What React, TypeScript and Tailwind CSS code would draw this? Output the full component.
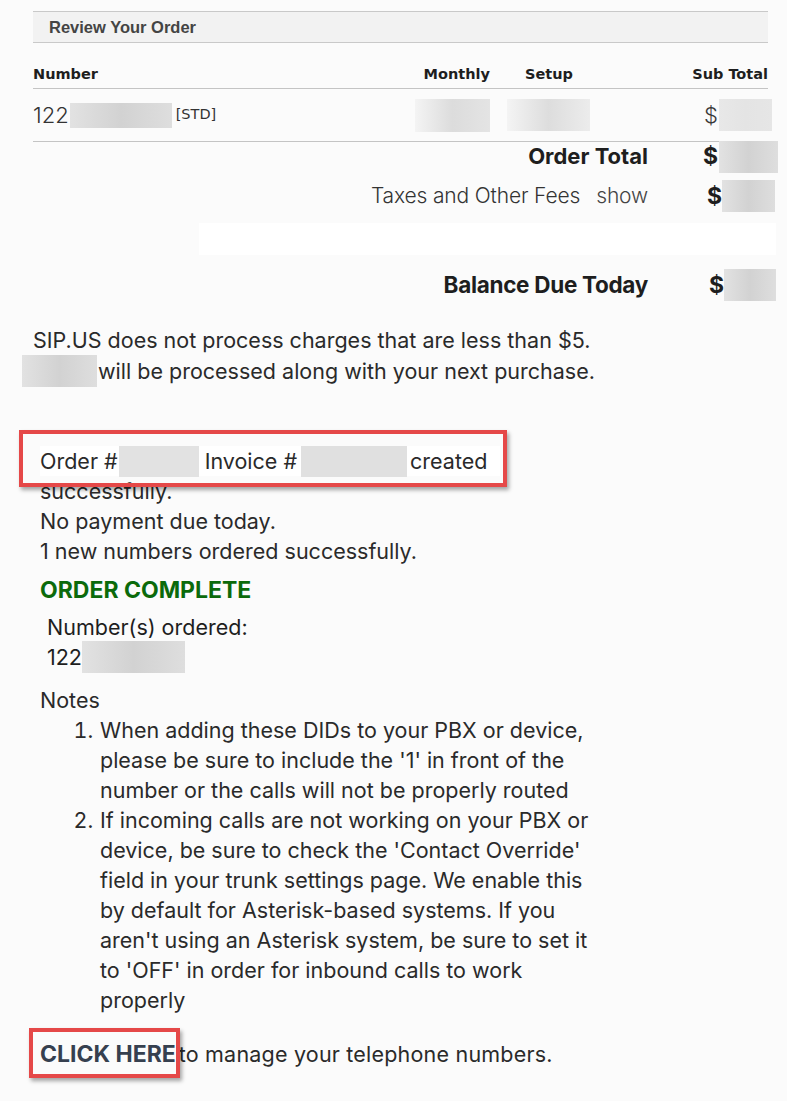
import React from "react";

function Blur({ className = "" }: { className?: string }) {
  return (
    <span
      className={
        "inline-block bg-gradient-to-r from-[#e2e2e2] via-[#d2d2d2] to-[#dedede] align-middle " +
        className
      }
    />
  );
}

export default function App() {
  return (
    <div className="min-h-[1101px] w-[787px] bg-[#fbfbfb] font-['Inter',sans-serif] text-[#262626] relative overflow-hidden">
      <div className="h-[11px]" />
      {/* Header bar */}
      <div className="ml-[33px] w-[735px] h-[32px] border-y border-[#c9c9c9] bg-[#f2f2f2] flex items-center pl-[16px]">
        <span className="font-['Liberation_Sans',sans-serif] font-bold text-[16.5px] text-[#444]">
          Review Your Order
        </span>
      </div>

      {/* Table */}
      <div className="ml-[33px] w-[735px]">
        <div className="grid grid-cols-[357px_100px_178px_100px] h-[46px] border-b border-[#c4c4c4] items-end pb-[5px] font-['DejaVu_Sans',sans-serif] font-bold text-[14.5px] text-[#1e1e1e] leading-[18px]">
          <div>Number</div>
          <div className="text-right">Monthly</div>
          <div className="pl-[35px]">Setup</div>
          <div className="text-right">Sub Total</div>
        </div>
        <div className="grid grid-cols-[357px_100px_178px_100px] h-[53px] border-b border-[#c4c4c4] items-center">
          <div className="flex items-center">
            <span className="text-[22px] font-light text-[#333]">122</span>
            <Blur className="w-[102px] h-[25px] ml-[1px]" />
            <span className="ml-[4px] font-['DejaVu_Sans',sans-serif] text-[14.5px] text-[#333]">[STD]</span>
          </div>
          <div className="flex justify-end">
            <Blur className="w-[75px] h-[33px] from-[#f4f4f4] via-[#dcdcdc] to-[#e4e4e4]" />
          </div>
          <div className="pl-[17px] flex">
            <Blur className="w-[83px] h-[32px] from-[#f4f4f4] via-[#dddddd] to-[#ececec]" />
          </div>
          <div className="flex justify-end items-center mr-[-4px]">
            <span className="text-[22px] font-light text-[#3a3a3a] mr-[1px]">$</span>
            <Blur className="w-[53px] h-[32px] from-[#e8e8e8] via-[#e4e4e4] to-[#e6e6e6]" />
          </div>
        </div>
      </div>

      {/* Totals */}
      <div className="flex items-center h-[33px] mt-[-2px]">
        <div className="w-[648px] text-right text-[22px] font-bold text-[#1e1e1e]">Order Total</div>
        <div className="ml-[55px] flex items-center">
          <span className="text-[23px] font-bold text-[#1e1e1e]">$</span>
          <Blur className="w-[59px] h-[32px] ml-[1px] from-[#d8d8d8] via-[#c8c8c8] to-[#dcdcdc]" />
        </div>
      </div>
      <div className="flex items-center h-[36px] mt-[5px]">
        <div className="w-[648px] text-right text-[21px] font-light text-[#333] tracking-[-0.15px]">
          Taxes and Other Fees<span className="ml-[16px] text-[#444]">show</span>
        </div>
        <div className="ml-[59px] flex items-center">
          <span className="text-[23px] font-bold text-[#1e1e1e]">$</span>
          <Blur className="w-[53px] h-[32px] from-[#cdcdcd] via-[#d0d0d0] to-[#d8d8d8]" />
        </div>
      </div>
      <div className="ml-[199px] w-[577px] h-[32px] mt-[9px] bg-white" />
      <div className="flex items-center h-[34px] mt-[13px]">
        <div className="w-[648px] text-right text-[22.5px] font-bold text-[#1e1e1e] tracking-[-0.3px]">
          Balance Due Today
        </div>
        <div className="ml-[61px] flex items-center">
          <span className="text-[23px] font-bold text-[#1e1e1e]">$</span>
          <Blur className="w-[52px] h-[32px] from-[#cccccc] via-[#d2d2d2] to-[#dddddd]" />
        </div>
      </div>

      {/* SIP.US notice */}
      <div className="mt-[23px] text-[21.5px] leading-[30px] text-[#2a2a2a]">
        <div className="ml-[33px]">SIP.US does not process charges that are less than $5.</div>
        <div className="ml-[22px] flex items-center">
          <Blur className="w-[75px] h-[32px] from-[#d6d6d6] via-[#cfcfcf] to-[#dcdcdc]" />
          <span className="ml-[1px]">will be processed along with your next purchase.</span>
        </div>
      </div>

      {/* Result messages */}
      <div className="relative mt-[59px] ml-[40px] text-[21.5px] leading-[30px] text-[#2a2a2a]">
        <div className="flex items-center h-[30px] bg-white w-[460px]">
          <span>Order #</span>
          <Blur className="w-[80px] h-[31px] ml-[1px] bg-none bg-[#e2e2e2]" />
          <span className="ml-[6px]">Invoice #</span>
          <Blur className="w-[106px] h-[31px] ml-[4px] bg-none bg-[#e0e0e0]" />
          <span className="ml-[3px]">created</span>
        </div>
        <div>successfully.</div>
        <div>No payment due today.</div>
        <div>1 new numbers ordered successfully.</div>
        <div className="absolute left-[-21px] top-[-16px] w-[488px] h-[57px] border-[4px] border-[#e54848] shadow-[2px_3px_4px_rgba(0,0,0,0.35)]" />
      </div>

      <div className="ml-[40px] mt-[9px] text-[23px] leading-[30px] font-bold text-[#0b6a0b]">
        ORDER COMPLETE
      </div>
      <div className="ml-[47px] mt-[8px] text-[21.5px] leading-[28px] text-[#1e1e1e]">
        <div>Number(s) ordered:</div>
        <div className="flex items-center">
          <span>122</span>
          <Blur className="w-[103px] h-[32px] from-[#d4d4d4] via-[#d0d0d0] to-[#dcdcdc]" />
        </div>
      </div>

      <div className="ml-[40px] mt-[12px] text-[21.5px] leading-[30px] text-[#2a2a2a]">
        <div>Notes</div>
        <ol className="list-decimal pl-[59px] w-[660px]">
          <li className="pl-[1px]">
            When adding these DIDs to your PBX or device,
            <br />
            please be sure to include the '1' in front of the
            <br />
            number or the calls will not be properly routed
          </li>
          <li className="pl-[1px]">
            If incoming calls are not working on your PBX or
            <br />
            device, be sure to check the 'Contact Override'
            <br />
            field in your trunk settings page. We enable this
            <br />
            by default for Asterisk-based systems. If you
            <br />
            aren't using an Asterisk system, be sure to set it
            <br />
            to 'OFF' in order for inbound calls to work
            <br />
            properly
          </li>
        </ol>
      </div>

      <div className="relative ml-[40px] mt-[24px] text-[21.5px] leading-[30px] text-[#2a2a2a]">
        <span className="font-bold text-[#36404f] text-[23px]">CLICK HERE</span>
        <span className="ml-[3px] tracking-[0.2px]">to manage your telephone numbers.</span>
        <div className="absolute left-[-11px] top-[-11px] w-[151px] h-[50px] border-[4px] border-[#e54848] shadow-[2px_3px_4px_rgba(0,0,0,0.35)]" />
      </div>
    </div>
  );
}
